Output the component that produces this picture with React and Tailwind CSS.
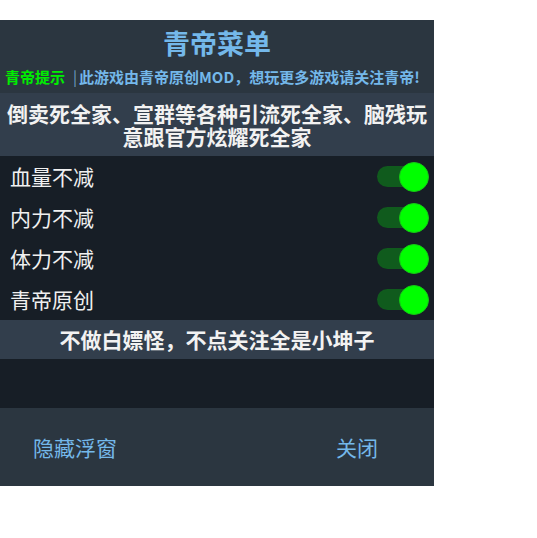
import { useState } from 'react';

const font = { fontFamily: '"Noto Sans CJK SC", "Noto Sans", sans-serif' };

function Toggle({ on, onClick }) {
    return (
        <button onClick={onClick} className="relative w-[52px] h-[32px] flex items-center">
            <span className={`absolute left-[0px] right-[6px] h-[21px] rounded-full ${on ? 'bg-[#105b1d]' : 'bg-[#3a444e]'}`} />
            <span
                className={`absolute top-[1px] w-[30px] h-[30px] rounded-full border border-[#16c716] ${
                    on ? 'right-[0px] bg-[#00ff00]' : 'left-[0px] bg-[#cccccc]'
                }`}
            />
        </button>
    );
}

export default function App() {
    const [items, setItems] = useState([
        { name: '血量不减', on: true },
        { name: '内力不减', on: true },
        { name: '体力不减', on: true },
        { name: '青帝原创', on: true },
    ]);

    const toggle = (i) => {
        setItems(items.map((it, idx) => (idx === i ? { ...it, on: !it.on } : it)));
    };

    return (
        <div className="w-[537px] h-[538px] bg-white pt-[20px]" style={font}>
            <div className="w-[434px] flex flex-col">
                <div className="bg-[#2b3640] h-[73px] flex flex-col">
                    <h1 className="text-[27px] font-bold text-[#74b8ea] text-center leading-[32px] mt-[7px]">青帝菜单</h1>
                    <p className="text-[15px] font-bold leading-[20px] mt-[8px] pl-[5px] whitespace-nowrap flex items-center">
                        <span className="text-[#00ee00]">青帝提示</span>
                        <span className="text-[#6f9fc4] font-normal ml-[8px] mr-[2px]">|</span>
                        <span className="text-[#74b8ea]">此游戏由青帝原创MOD，想玩更多游戏请关注青帝!</span>
                    </p>
                </div>
                <div className="bg-[#323e4c] h-[63px] flex items-center justify-center">
                    <p className="text-[21px] font-bold text-[#f2f2f2] text-center leading-[23px] px-[4px]">
                        倒卖死全家、宣群等各种引流死全家、脑残玩意跟官方炫耀死全家
                    </p>
                </div>
                <div className="bg-[#171e26]">
                    {items.map((it, i) => (
                        <div key={it.name} className="h-[41px] flex items-center justify-between pl-[10px] pr-[5px]">
                            <span className="text-[21px] text-[#f0f0f0] leading-none">{it.name}</span>
                            <Toggle on={it.on} onClick={() => toggle(i)} />
                        </div>
                    ))}
                </div>
                <div className="bg-[#323e4c] h-[39px] flex items-center justify-center">
                    <p className="text-[21px] font-bold text-[#f2f2f2] leading-none">不做白嫖怪，不点关注全是小坤子</p>
                </div>
                <div className="bg-[#171e26] h-[49px]" />
                <div className="bg-[#2b3640] h-[78px] flex items-center justify-between pl-[33px] pr-[56px]">
                    <button className="text-[21px] text-[#74b8ea] leading-none">隐藏浮窗</button>
                    <button className="text-[21px] text-[#74b8ea] leading-none">关闭</button>
                </div>
            </div>
        </div>
    );
}
